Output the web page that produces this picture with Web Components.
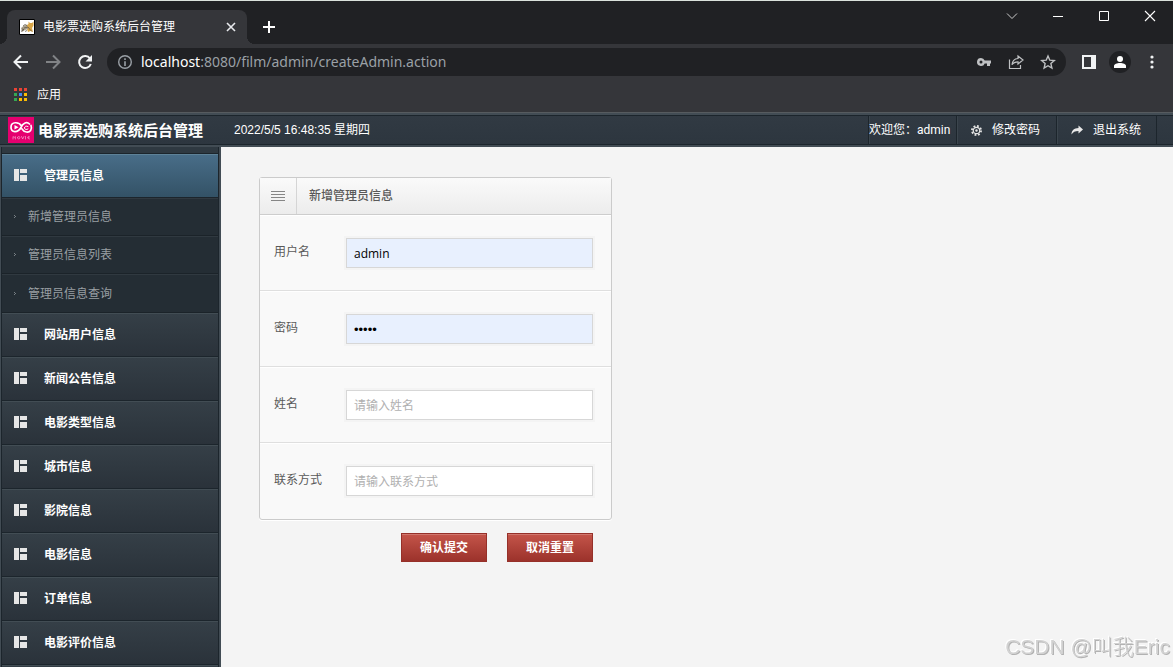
<!DOCTYPE html>
<html lang="zh-CN">
<head>
<meta charset="utf-8">
<title>电影票选购系统后台管理</title>
<style>
  html, body {
    height: 100%;
  }
  body {
    margin: 0;
    display: flex;
    flex-direction: column;
    overflow: hidden;
    background: #f4f4f4;
    font: 12px/20px "Open Sans", "Noto Sans CJK SC", sans-serif;
  }
  main {
    flex: 1;
    min-height: 0;
    display: flex;
  }
  .content {
    flex: 1;
    padding: 30px 38px;
  }
</style>
</head>
<body>
  <browser-tabs>电影票选购系统后台管理</browser-tabs>
  <browser-toolbar host="localhost" path=":8080/film/admin/createAdmin.action"></browser-toolbar>
  <bookmark-bar>应用</bookmark-bar>

  <admin-header user="admin">
    <span slot="title">电影票选购系统后台管理</span>
    <span slot="time">2022/5/5 16:48:35 星期四</span>
  </admin-header>

  <main>
    <side-menu>
      <menu-group label="管理员信息" opened>
        <menu-link>新增管理员信息</menu-link>
        <menu-link>管理员信息列表</menu-link>
        <menu-link>管理员信息查询</menu-link>
      </menu-group>
      <menu-group label="网站用户信息"></menu-group>
      <menu-group label="新闻公告信息"></menu-group>
      <menu-group label="电影类型信息"></menu-group>
      <menu-group label="城市信息"></menu-group>
      <menu-group label="影院信息"></menu-group>
      <menu-group label="电影信息"></menu-group>
      <menu-group label="订单信息"></menu-group>
      <menu-group label="电影评价信息"></menu-group>
    </side-menu>
    <div class="content">
      <admin-form>
        <span slot="title">新增管理员信息</span>
        <form-field label="用户名" name="username" value="admin" filled></form-field>
        <form-field label="密码" name="password" type="password" value="admin" filled></form-field>
        <form-field label="姓名" name="realname" placeholder="请输入姓名"></form-field>
        <form-field label="联系方式" name="contact" placeholder="请输入联系方式"></form-field>
      </admin-form>
    </div>
  </main>
  <water-mark>CSDN @叫我Eric</water-mark>

<script>
const base = `
  :host, *, *::before, *::after { box-sizing: border-box; }
  button, input { font: inherit; margin: 0; }
  button { border: 0; padding: 0; background: none; color: inherit; }
  a { color: inherit; text-decoration: none; }
  svg { display: block; flex: none; }
`;

class BaseElement extends HTMLElement {
  constructor() {
    super();
    this.attachShadow({ mode: "open" });
  }

  connectedCallback() {
    this.shadowRoot.innerHTML = `<style>${base}${this.css()}</style>${this.html()}`;
  }

  attr(name) {
    return this.getAttribute(name) || "";
  }
}

class BrowserTabs extends BaseElement {
  css() {
    return `
      :host {
        display: flex;
        align-items: flex-end;
        height: 44px;
        background: #202124;
        border-top: 1px solid #dbe2dc;
        padding-left: 7px;
        color: #fff;
      }
      .tab {
        position: relative;
        display: flex;
        align-items: center;
        width: 240px;
        height: 34px;
        padding: 0 9px 0 12px;
        gap: 8px;
        border-radius: 8px 8px 0 0;
        background: #35363a;
      }
      .tab::before, .tab::after {
        content: "";
        position: absolute;
        bottom: 0;
        width: 8px;
        height: 8px;
      }
      .tab::before {
        right: 100%;
        background: radial-gradient(circle at 0 0, transparent 8px, #35363a 8px);
      }
      .tab::after {
        left: 100%;
        background: radial-gradient(circle at 100% 0, transparent 8px, #35363a 8px);
      }
      .name { flex: 1; white-space: nowrap; }
      .new { align-self: center; margin-left: 15px; padding-top: 8px; }
      .window { margin-left: auto; align-self: flex-start; display: flex; }
      .window button { width: 46px; height: 30px; display: grid; place-items: center; }
    `;
  }
  html() {
    return `
      <div class="tab">
        <svg width="16" height="16" viewBox="0 0 16 16">
          <path fill="#fff" stroke="#000" d="M.5.5h15v15H.5z"/>
          <path fill="#d9a648" d="M8 6l1.500-1V2.500L11 4h2l1.500-1.500v4L13 9l1 4-2.500-1L9 13l-1-3z"/>
          <path fill="#a9a08c" d="M2 9l3-2.500L8 6l1 4-3 1-3 2z"/>
          <path fill="none" stroke="#544b3b" stroke-width=".7" d="M2 12.500l3-2-2-.5M4 7l2-1.500 2 1M5 9l4-1 2 2.500 2 2M6 12.500l2-1"/>
        </svg>
        <span class="name"><slot></slot></span>
        <button aria-label="关闭标签页">
          <svg width="14" height="14" viewBox="0 0 14 14" stroke="#e8eaed" stroke-width="1.600"><path d="M3 3l8 8M11 3l-8 8"/></svg>
        </button>
      </div>
      <button class="new" aria-label="新标签页">
        <svg width="14" height="14" viewBox="0 0 14 14" stroke="#fff" stroke-width="2"><path d="M7 1v12M1 7h12"/></svg>
      </button>
      <div class="window">
        <button aria-label="搜索标签页"><svg width="12" height="12" viewBox="0 0 12 12" fill="none" stroke="#ccc"><path d="M1 3.500l5 5 5-5"/></svg></button>
        <button aria-label="最小化"><svg width="12" height="12" viewBox="0 0 12 12" stroke="#fff"><path d="M1 6.500h10"/></svg></button>
        <button aria-label="最大化"><svg width="12" height="12" viewBox="0 0 12 12" fill="none" stroke="#fff"><path d="M1.500 1.500h9v9h-9z"/></svg></button>
        <button aria-label="关闭"><svg width="12" height="12" viewBox="0 0 12 12" stroke="#fff" stroke-width="1.100"><path d="M1 1l10 10M11 1L1 11"/></svg></button>
      </div>
    `;
  }
}

class BrowserToolbar extends BaseElement {
  css() {
    return `
      :host {
        display: flex;
        align-items: center;
        height: 36px;
        padding: 0 13px;
        background: #35363a;
        color: #fff;
      }
      .nav { display: flex; gap: 16px; margin-right: 14px; }
      .address {
        flex: 1;
        display: flex;
        align-items: center;
        height: 28px;
        padding: 0 10px;
        border-radius: 14px;
        background: #202124;
      }
      .url {
        flex: 1;
        margin-left: 8px;
        font-family: "Noto Sans", sans-serif;
        font-size: 14px;
        white-space: nowrap;
        color: #9aa0a6;
      }
      .url b { font-weight: normal; color: #fff; }
      .actions { display: flex; gap: 16px; }
      .right { display: flex; align-items: center; gap: 13px; margin-left: 16px; }
      .avatar { width: 22px; height: 22px; border-radius: 50%; background: #202124; display: grid; place-items: center; }
    `;
  }
  html() {
    return `
      <div class="nav">
        <button aria-label="后退"><svg width="16" height="16" viewBox="0 0 16 16" fill="none" stroke="#f1f3f4" stroke-width="2"><path d="M15 8H2M8 1.500L1.500 8 8 14.500"/></svg></button>
        <button aria-label="前进"><svg width="16" height="16" viewBox="0 0 16 16" fill="none" stroke="#818386" stroke-width="2"><path d="M1 8h13M8 1.500L14.500 8 8 14.500"/></svg></button>
        <button aria-label="刷新"><svg width="16" height="16" viewBox="0 0 16 16"><path fill="none" stroke="#f1f3f4" stroke-width="2" d="M13 4.500A6 6 0 1 0 13.800 10"/><path fill="#f1f3f4" d="M15 1v6.500H8.500z"/></svg></button>
      </div>
      <div class="address">
        <svg width="16" height="16" viewBox="0 0 16 16"><circle cx="8" cy="8" r="6.300" fill="none" stroke="#9aa0a6" stroke-width="1.400"/><path fill="#9aa0a6" d="M7.200 7.200h1.600V12H7.200zM7.200 4.200h1.600v1.700H7.200z"/></svg>
        <span class="url"><b>${this.attr("host")}</b>${this.attr("path")}</span>
        <div class="actions">
          <button aria-label="密码"><svg width="16" height="16" viewBox="0 0 16 16"><path fill="#bfc1c3" fill-rule="evenodd" d="M5 4a4 4 0 1 0 3.700 5.500H11V12h3V9.500h1v-3H8.700A4 4 0 0 0 5 4zm0 2.500a1.500 1.500 0 1 1 0 3 1.500 1.500 0 0 1 0-3z"/></svg></button>
          <button aria-label="分享"><svg width="16" height="16" viewBox="0 0 16 16" fill="none" stroke="#bfc1c3" stroke-width="1.200"><path d="M1.500 5.500v9h11V11"/><path d="M10 2l5 4-5 4V7.800c-3 0-4.800 1-6 3 .3-4 2.500-6 6-6.300z"/></svg></button>
          <button aria-label="收藏"><svg width="16" height="16" viewBox="0 0 16 16" fill="none" stroke="#bfc1c3" stroke-width="1.400"><path d="M8 2l1.800 4.200 4.500.4-3.400 3 1 4.400L8 11.700 4.100 14l1-4.400-3.400-3 4.500-.4z"/></svg></button>
        </div>
      </div>
      <div class="right">
        <button aria-label="侧边栏"><svg width="14" height="14" viewBox="0 0 14 14"><path fill="#f1f3f4" fill-rule="evenodd" d="M0 0h14v14H0zM2 2v10h7V2z"/></svg></button>
        <button class="avatar" aria-label="用户"><svg width="12" height="12" viewBox="0 0 12 12" fill="#fff"><circle cx="6" cy="3" r="3"/><path d="M0 12v-2c0-2 3-3 6-3s6 1 6 3v2z"/></svg></button>
        <button aria-label="菜单"><svg width="16" height="14" viewBox="0 0 16 14" fill="#f1f3f4"><circle cx="8" cy="2" r="1.600"/><circle cx="8" cy="7" r="1.600"/><circle cx="8" cy="12" r="1.600"/></svg></button>
      </div>
    `;
  }
}

class BookmarkBar extends BaseElement {
  css() {
    return `
      :host {
        display: flex;
        align-items: center;
        height: 32px;
        padding: 0 14px 3px;
        background: #35363a;
        color: #fff;
      }
      a { display: flex; align-items: center; gap: 10px; }
    `;
  }
  html() {
    const colors = ["#ea4335", "#ea4335", "#ea4335", "#34a853", "#4285f4", "#fbbc04", "#34a853", "#fbbc04", "#fbbc04"];
    const dots = colors.map((c, i) => `<rect x="${(i % 3) * 5}" y="${Math.floor(i / 3) * 5}" width="3" height="3" fill="${c}"/>`);
    return `<a href="#"><svg width="13" height="13" viewBox="0 0 13 13">${dots.join("")}</svg><slot></slot></a>`;
  }
}

class AdminHeader extends BaseElement {
  css() {
    return `
      :host {
        display: block;
        border-top: 1px solid #565b5f;
        background: #424c54;
        padding: 2px 0;
        color: #fff;
      }
      header {
        display: flex;
        align-items: center;
        height: 30px;
        border-top: 1px solid #1c252c;
        border-bottom: 1px solid #1c252c;
        background: linear-gradient(#313a43, #2d363f);
        padding: 0 16px 0 8px;
      }
      .brand { display: flex; align-items: center; gap: 4px; width: 226px; font-size: 15px; font-weight: bold; white-space: nowrap; }
      .time { font-family: "Liberation Sans", "Noto Sans CJK SC", sans-serif; }
      nav { display: flex; margin-left: auto; height: 28px; line-height: 28px; border-right: 1px solid #1c252c; }
      nav > * { border-left: 1px solid #1c252c; box-shadow: inset 1px 0 #3b454d; }
      .user { width: 88px; white-space: nowrap; font-family: Roboto, "Noto Sans CJK SC", sans-serif; }
      nav a { display: flex; align-items: center; gap: 10px; width: 100px; padding-left: 14px; white-space: nowrap; }
    `;
  }
  html() {
    return `
      <header>
        <div class="brand">
          <svg width="26" height="26" viewBox="0 0 26 26">
            <path fill="#e5006f" d="M0 0h26v26H0z"/>
            <g fill="none" stroke="#fff" stroke-linecap="round">
              <path stroke-width="1.700" d="M13.500 9C11 4.500 3 4.500 3 10.200S10 16 13 10.500c2-5 6-6 8.500-3.500M23 8.500c1.500 4-1 7-4.500 6.500-2 0-3.500-1.500-4.500-3"/>
              <path stroke-width="1" d="M20 9.500c-2-1-3.500 0-3.500 1.500s2 2 3.500 1"/>
              <path stroke="#f6a3cd" stroke-width=".7" d="M5 22v-2.500l1.200 1 1.200-1V22M9.500 20.700a1.200 1.200 0 1 0 2.400 0 1.200 1.200 0 1 0-2.400 0M13.500 19.500l1.200 2.500 1.200-2.500M17.500 19.500V22M21.500 22c-2 0-2-2.500-.8-2.500s1 1.300-.8 1.300"/>
            </g>
            <path fill="#fff" d="M6.500 8l4 2.200-4 2.200z"/>
          </svg>
          <slot name="title"></slot>
        </div>
        <div class="time"><slot name="time"></slot></div>
        <nav>
          <span class="user">欢迎您：${this.attr("user")}</span>
          <a href="#">
            <svg width="11" height="11" viewBox="0 0 12 12"><g fill="none" stroke="#e4e4e4"><circle cx="6" cy="6" r="5" stroke-width="2" stroke-dasharray="2 1.927"/><circle cx="6" cy="6" r="3.500" stroke-width="1.300"/></g><circle cx="6" cy="6" r="1.300" fill="#e4e4e4"/></svg>
            修改密码
          </a>
          <a href="#">
            <svg width="12" height="12" viewBox="0 0 12 12" fill="#e8e8e8"><path d="M7.500 1.500L12 5.500l-4.500 4V7C4 7 2 8 .5 10.500.5 6.500 3 4.200 7.500 4z"/></svg>
            退出系统
          </a>
        </nav>
      </header>
    `;
  }
}

class SideMenu extends BaseElement {
  css() {
    return `
      :host {
        display: block;
        width: 221px;
        overflow: hidden;
        background: #2f3941;
        border-left: 1px solid #424c54;
        border-right: 2px solid #424c54;
      }
      nav {
        display: flex;
        flex-direction: column;
        min-height: 100%;
        border: solid #1c252c;
        border-width: 0 1px;
      }
      .top { height: 7px; border-bottom: 1px solid #1c252c; }
      .rest { flex: 1; border-top: 1px solid #424d54; background: #343e46; }
    `;
  }
  html() {
    return `<nav><div class="top"></div><slot></slot><div class="rest"></div></nav>`;
  }
}

class MenuGroup extends BaseElement {
  css() {
    return `
      :host { display: block; }
      .head {
        display: flex;
        align-items: center;
        gap: 17px;
        height: 44px;
        padding: 0 12px;
        border-top: 1px solid #424d54;
        border-bottom: 1px solid #1c252c;
        background: linear-gradient(#353f47, #2a323a);
        color: #fff;
        font-weight: bold;
      }
      :host([opened]) .head {
        border-top-color: #5e8298;
        background: linear-gradient(#486d88, #335266);
      }
    `;
  }
  html() {
    return `
      <a class="head" href="#">
        <svg width="13" height="14" viewBox="0 0 13 14" fill="#e6e6e6"><path d="M0 0h5v12H0zM6 0h7v4H6zM6 6h7v6H6z"/></svg>
        ${this.attr("label")}
      </a>
      <slot></slot>
    `;
  }
}

class MenuLink extends BaseElement {
  css() {
    return `
      :host { display: block; }
      a {
        display: flex;
        align-items: center;
        gap: 12px;
        height: 38px;
        padding: 0 12px;
        border-top: 1px solid #303940;
        border-bottom: 1px solid #1b2329;
        background: #242d34;
        color: #999fa3;
      }
      :host(:last-child) a { height: 39px; }
    `;
  }
  html() {
    return `
      <a href="#">
        <svg width="2" height="4" viewBox="0 0 2 4" fill="#777f84"><path d="M0 0h1v1H0zM1 1h1v1H1zM0 2h1v1H0z"/></svg>
        <slot></slot>
      </a>
    `;
  }
}

class FormField extends BaseElement {
  css() {
    return `
      :host {
        display: flex;
        height: 76px;
        align-items: center;
        padding: 0 18px 0 14px;
        border-bottom: 1px solid #dfdfdf;
        border-top: 1px solid #fff;
        color: #595959;
      }
      :host(:last-of-type) { border-bottom-color: transparent; }
      label { width: 72px; padding-bottom: 2px; }
      input {
        flex: 1;
        min-width: 0;
        height: 30px;
        padding: 0 7px;
        border: 1px solid #d7d7d7;
        box-shadow: 0 0 0 2px #f4f4f4;
        outline: 0;
        background: #fff;
        color: #000;
      }
      input::placeholder { color: #b0b0b0; }
      :host([filled]) input { background: #e8f0fe; }
      input[type=password] { font-family: "Liberation Sans", sans-serif; font-size: 13px; }
    `;
  }
  html() {
    const name = this.attr("name");
    return `
      <label for="${name}">${this.attr("label")}</label>
      <input id="${name}" name="${name}" type="${this.attr("type") || "text"}"
        value="${this.attr("value")}" placeholder="${this.attr("placeholder")}">
    `;
  }
}

class AdminForm extends BaseElement {
  css() {
    return `
      :host { display: block; width: 353px; }
      .panel {
        border: 1px solid #cbcbcb;
        border-radius: 3px;
        background: #f9f9f9;
        box-shadow: 0 1px #fff;
      }
      .head {
        display: flex;
        height: 37px;
        border-bottom: 1px solid #cdcdcd;
        background: linear-gradient(#fafafa, #ececec);
        color: #595959;
        line-height: 36px;
        font-weight: 500;
      }
      .icon { width: 37px; display: grid; place-items: center; border-right: 1px solid #d5d5d5; }
      .title { margin-left: 12px; }
      .buttons { display: flex; justify-content: flex-end; gap: 20px; padding: 13px 19px 0; }
      .buttons button {
        width: 86px;
        height: 29px;
        border: 1px solid #963029;
        background: linear-gradient(#c4554a, #9c322b);
        box-shadow: inset 0 1px #d0776e;
        color: #fff;
        font-weight: bold;
      }
    `;
  }
  html() {
    return `
      <form>
        <div class="panel">
          <div class="head">
            <span class="icon"><svg width="14" height="11" viewBox="0 0 14 11" fill="#868686"><path d="M0 0h14v1H0zM0 3h14v1H0zM0 6h14v1H0zM0 9h14v1H0z"/></svg></span>
            <span class="title"><slot name="title"></slot></span>
          </div>
          <slot></slot>
        </div>
        <div class="buttons">
          <button type="button">确认提交</button>
          <button type="reset">取消重置</button>
        </div>
      </form>
    `;
  }

  connectedCallback() {
    super.connectedCallback();
    this.shadowRoot.querySelector("form").addEventListener("reset", () => this.handleReset());
  }

  handleReset() {
    this.querySelectorAll("form-field").forEach((field) => {
      const input = field.shadowRoot.querySelector("input");
      input.value = input.defaultValue;
    });
  }
}

class WaterMark extends BaseElement {
  css() {
    return `
      :host {
        position: fixed;
        right: 3px;
        bottom: 4px;
        font: 21px/32px "Liberation Sans", "Noto Sans CJK SC", sans-serif;
        font-weight: 300;
        color: #d2d2d2;
        text-shadow: 1px 1px #b2b2b2, -1px -1px #fff;
        pointer-events: none;
      }
    `;
  }
  html() {
    return `<slot></slot>`;
  }
}

customElements.define("browser-tabs", BrowserTabs);
customElements.define("browser-toolbar", BrowserToolbar);
customElements.define("bookmark-bar", BookmarkBar);
customElements.define("admin-header", AdminHeader);
customElements.define("menu-link", MenuLink);
customElements.define("menu-group", MenuGroup);
customElements.define("side-menu", SideMenu);
customElements.define("form-field", FormField);
customElements.define("admin-form", AdminForm);
customElements.define("water-mark", WaterMark);
</script>
</body>
</html>
